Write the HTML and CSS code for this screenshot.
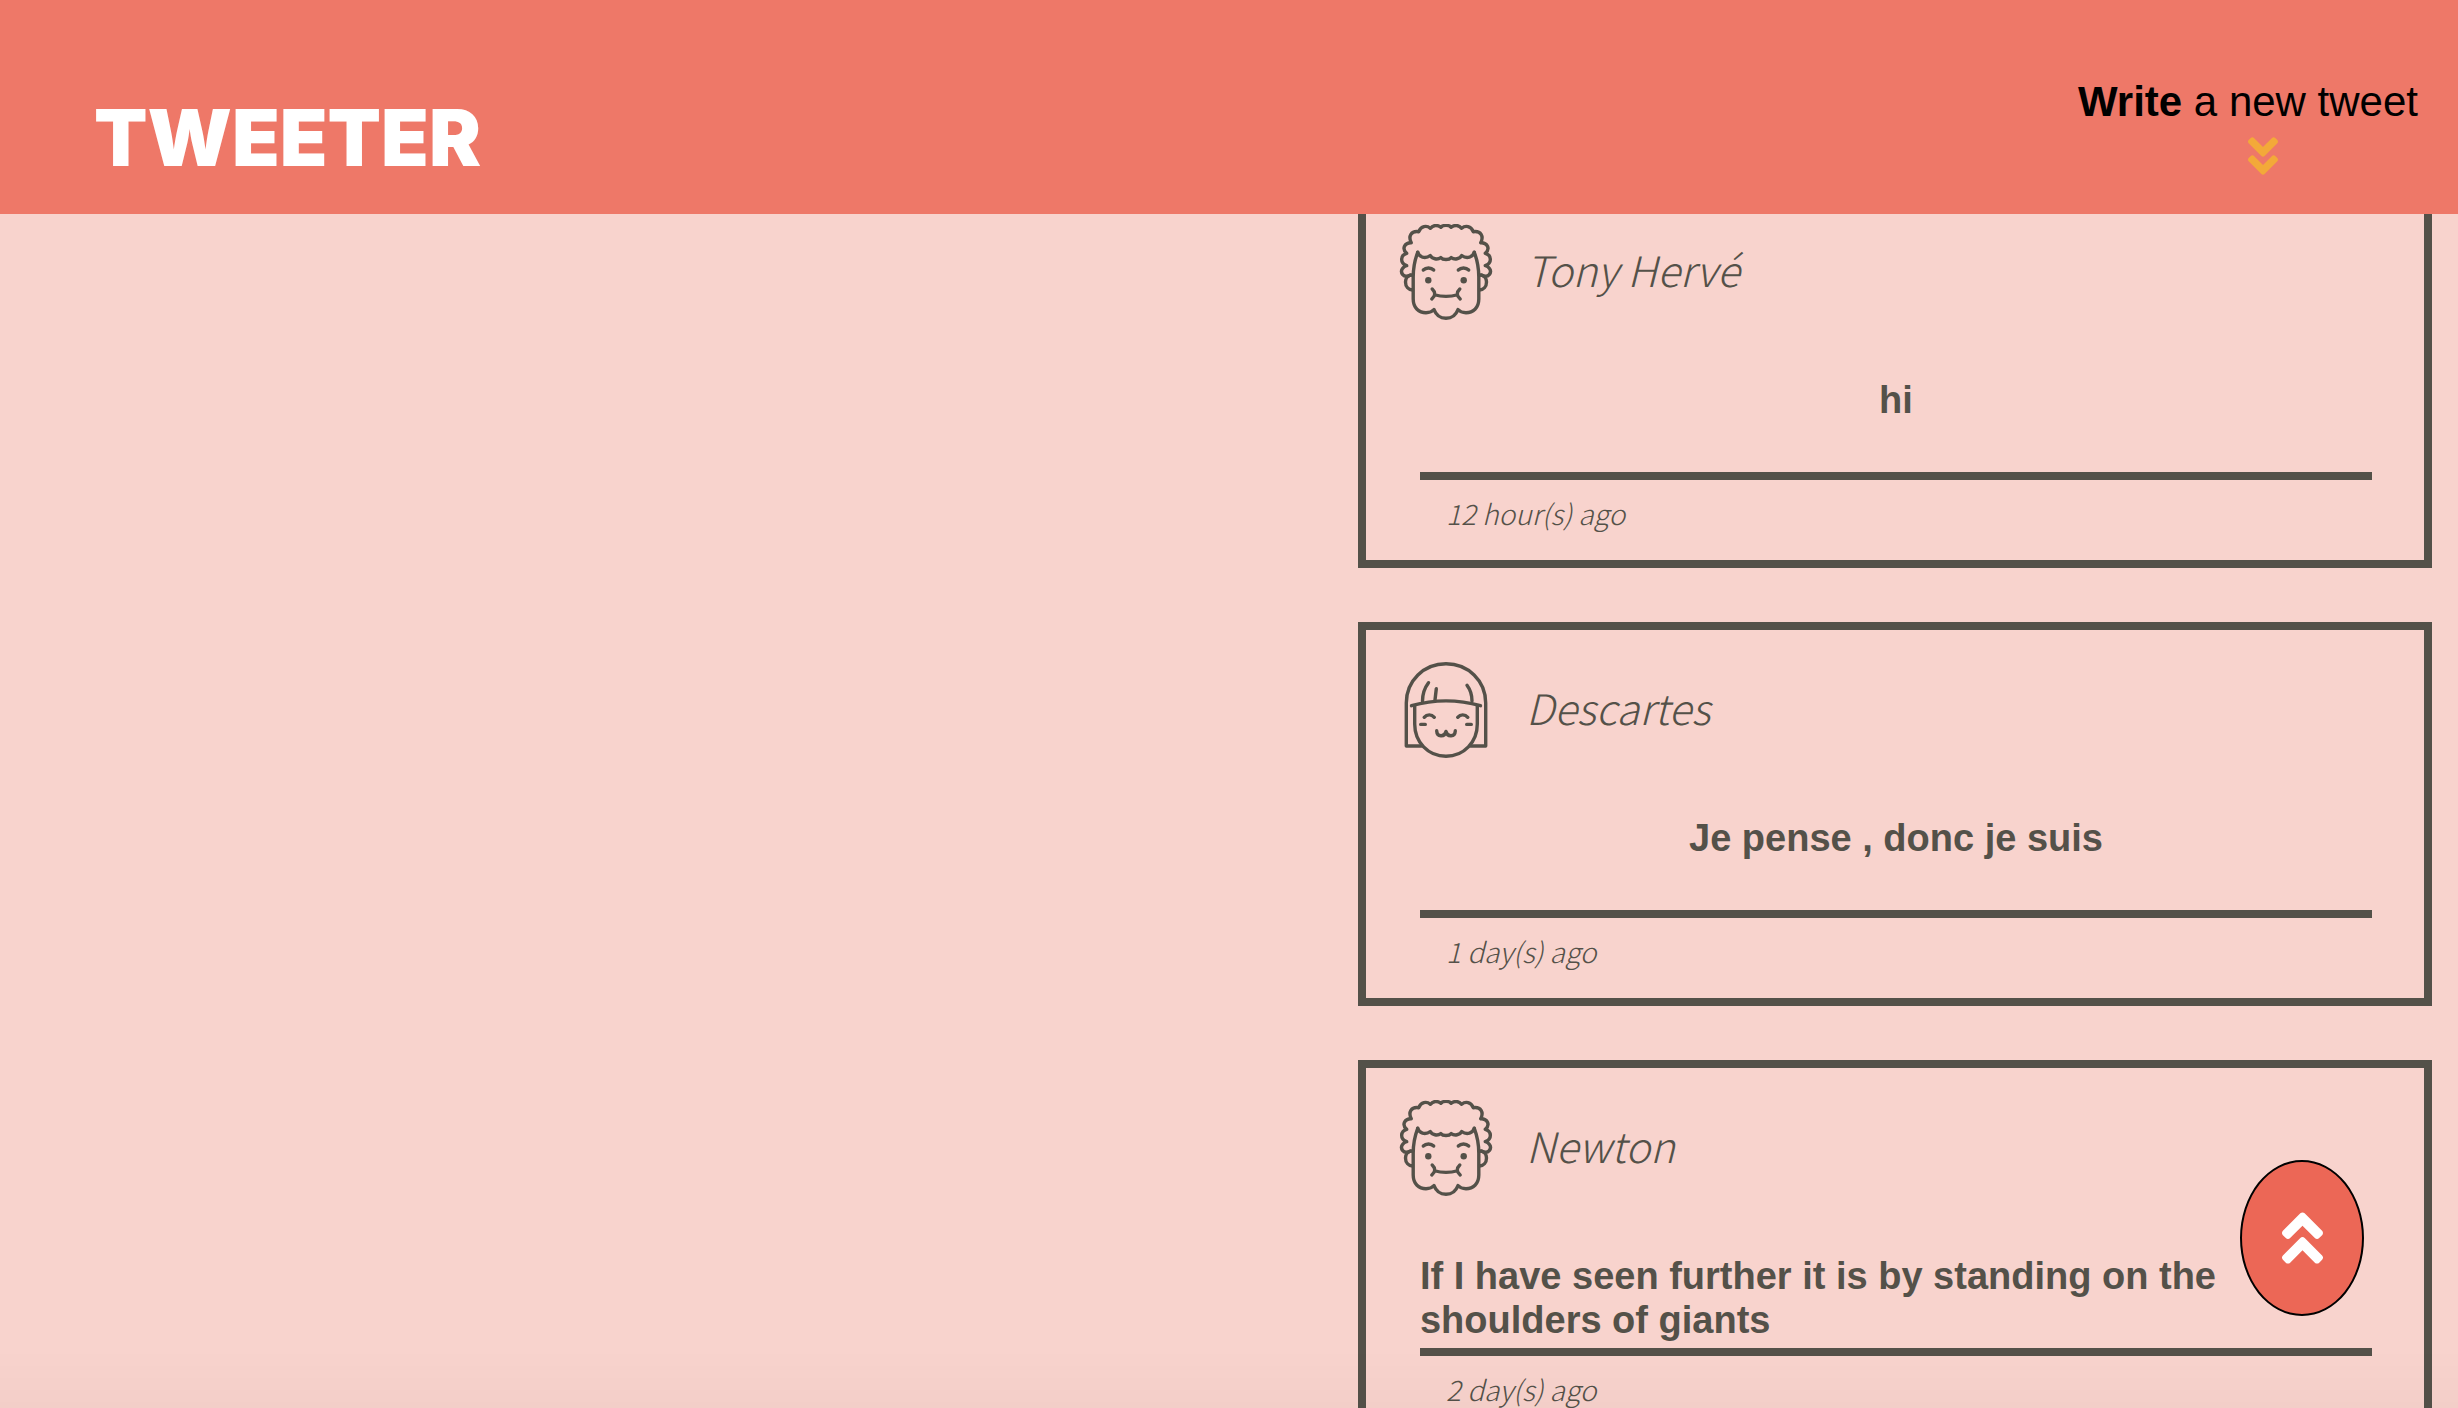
FILE: index.html
```html
<!DOCTYPE html>
<html lang="en">
<head>
<meta charset="utf-8">
<title>Tweeter</title>
<link rel="stylesheet" href="styles.css">
</head>
<body>
<svg class="sprite" aria-hidden="true">
  <symbol id="avatar-curly" viewBox="0 0 96 96" stroke-width="3.4">
    <path d="M19.7 28.3C17.2 35 15.2 45 15.2 53V75C15.2 84 21 88.7 28 88.7C31.5 88.7 34.3 87.5 36 85.5C38 91 42 94.3 48 94.3C54 94.3 58 91 60 85.5C61.7 87.5 64.5 88.7 68 88.7C75 88.7 80.8 84 80.8 75V53C80.8 45 78.8 35 76.3 28.3"/>
    <path d="M19.7 28.3C21 33 27 35.5 32.3 31.5C34 35 39.5 36 42.8 33.6C45 36.2 51 36.2 53.2 33.6C56.5 36 62 35 63.7 31.5C69 35.5 75 33 76.3 28.3"/>
    <path d="M12.5 51C5 55 2 48 4.5 44.5C5.5 43 7 42 8.7 41.7C1.5 39 2.5 31 8.7 29.3C3.5 25 6.5 18.5 13.3 18.7C10 12.5 13 6.5 20.8 7.7C23 2 28.5 1 32.3 4.3C35 1 39.5 0.5 42.8 3.3C45 0.7 51 0.7 53.2 3.3C56.5 0.5 61 1 63.7 4.3C67.5 1 73 2 75.2 7.7C83 6.5 86 12.5 82.7 18.7C89.5 18.5 92.5 25 87.3 29.3C93.5 31 94.5 39 87.3 41.7C89 42 90.5 43 91.5 44.5C94 48 91 55 83.5 51"/>
    <path d="M14.5 51C9.5 51 7.5 55 7.5 58C7.5 62.5 10.5 65.8 14.5 66M81.5 51C86.5 51 88.5 55 88.5 58C88.5 62.5 85.5 65.8 81.5 66"/>
    <path d="M25.3 46C28 43.3 33 43.3 35.7 46M60.3 46C63 43.3 68 43.3 70.7 46"/>
    <path d="M34.2 65Q39.5 70 33.8 75M61.8 65Q56.5 70 62.2 75M37.5 71C43 72.8 53 72.8 58.5 71"/>
    <circle class="dot" cx="30.3" cy="56.2" r="3.2"/><circle class="dot" cx="65.7" cy="56.2" r="3.2"/>
  </symbol>
  <symbol id="avatar-bob" viewBox="0 0 96 96" stroke-width="3.4">
    <path d="M23.5 84H8.3V41C8.3 18.5 26 1.7 48 1.7S87.7 18.5 87.7 41V84H72.5"/>
    <path d="M13.5 43.7Q48 34 82.5 43.7"/>
    <path d="M16.7 44V62C16.7 80 30 94.3 48 94.3S79.3 80 79.3 62V44"/>
    <path d="M30.5 20.7C26.5 26 24.5 32 24.5 39M38.3 26.7L37 38M69 23.3C72.5 28 74 33 74 39"/>
    <path d="M26.2 55.3C29 52 33.5 52 36.3 55.3M59.7 55.3C62.5 52 67 52 69.8 55.3"/>
    <path d="M22.7 62.4H27.3M68.7 62.4H73.3"/>
    <path d="M38.7 68.8C39 75 46.5 75.5 48 69.5C49.5 75.5 57 75 57.3 68.8"/>
  </symbol>
</svg>

<header class="topbar">
  <h1 class="logo">TWEETER</h1>
  <a class="compose" href="#new-tweet">
    <span><strong>Write</strong> a new tweet</span>
    <svg class="compose-icon" viewBox="0 0 320 512" aria-hidden="true"><path d="M143 256.3L7 120.3c-9.4-9.4-9.4-24.6 0-33.9l22.6-22.6c9.4-9.4 24.6-9.4 33.9 0l96.4 96.4 96.4-96.4c9.4-9.4 24.6-9.4 33.9 0L313 86.3c9.4 9.4 9.4 24.6 0 33.9l-136 136c-9.4 9.5-24.6 9.5-34 .1zm34 192l136-136c9.4-9.4 9.4-24.6 0-33.9l-22.6-22.6c-9.4-9.4-24.6-9.4-33.9 0L160 352.1l-96.4-96.4c-9.4-9.4-24.6-9.4-33.9 0L7 278.3c-9.4 9.4-9.4 24.6 0 33.9l136 136c9.4 9.5 24.6 9.5 34 .1z"/></svg>
  </a>
</header>

<main class="page">
  <section class="feed" aria-label="Tweets">
    <article class="tweet">
      <header class="tweet-head">
        <svg class="avatar" aria-hidden="true"><use href="#avatar-curly"/></svg>
        <h2 class="name">Tony Hervé</h2>
      </header>
      <div class="tweet-body"><p class="tweet-text">hi</p></div>
      <footer class="tweet-foot">12 hour(s) ago</footer>
    </article>
    <article class="tweet">
      <header class="tweet-head">
        <svg class="avatar" aria-hidden="true"><use href="#avatar-bob"/></svg>
        <h2 class="name">Descartes</h2>
      </header>
      <div class="tweet-body"><p class="tweet-text">Je pense , donc je suis</p></div>
      <footer class="tweet-foot">1 day(s) ago</footer>
    </article>
    <article class="tweet">
      <header class="tweet-head">
        <svg class="avatar" aria-hidden="true"><use href="#avatar-curly"/></svg>
        <h2 class="name">Newton</h2>
      </header>
      <div class="tweet-body"><p class="tweet-text">If I have seen further it is by standing on the shoulders of giants</p></div>
      <footer class="tweet-foot">2 day(s) ago</footer>
    </article>
  </section>
</main>

<button class="to-top" type="button" aria-label="Back to top">
  <svg class="to-top-icon" viewBox="0 0 320 512" aria-hidden="true"><path d="M177 255.7l136 136c9.4 9.4 9.4 24.6 0 33.9l-22.6 22.6c-9.4 9.4-24.6 9.4-33.9 0L160 351.9l-96.4 96.4c-9.4 9.4-24.6 9.4-33.9 0L7 425.7c-9.4-9.4-9.4-24.6 0-33.9l136-136c9.4-9.5 24.6-9.5 34-.1zm-34-192L7 199.7c-9.4 9.4-9.4 24.6 0 33.9l22.6 22.6c9.4 9.4 24.6 9.4 33.9 0l96.4-96.4 96.4 96.4c9.4 9.4 24.6 9.4 33.9 0l22.6-22.6c9.4-9.4 9.4-24.6 0-33.9l-136-136c-9.2-9.4-24.4-9.4-33.8 0z"/></svg>
</button>
</body>
</html>
```
FILE: styles.css
```css
:root {
  --ink: #545149;
  --blush: #f8d3cd;
  --coral: #ee7868;
}

* {
  box-sizing: border-box;
}

body {
  margin: 0;
  height: 100vh;
  overflow: hidden;
  background: var(--blush);
  color: var(--ink);
  font-family: "Liberation Sans", Arial, sans-serif;
}

/* Soft shade along the bottom edge of the window */
body::after {
  content: "";
  position: fixed;
  inset: auto 0 0;
  height: 60px;
  background: linear-gradient(rgba(0, 0, 0, 0), rgba(0, 0, 0, 0.02));
  pointer-events: none;
}

.sprite {
  display: none;
}

/* Top bar */
.topbar {
  position: fixed;
  inset: 0 0 auto;
  z-index: 1;
  display: flex;
  justify-content: space-between;
  padding: 78px 40px 30px 94px;
  height: 214px;
  background: var(--coral);
}

.logo {
  margin: 0;
  padding-top: 20px;
  color: #fff;
  font: 900 78px/80px Inter, sans-serif;
}

.compose {
  display: flex;
  flex-direction: column;
  align-items: center;
  color: #000;
  font-size: 42px;
  line-height: 48px;
  text-decoration: none;
}

.compose-icon {
  width: 30px;
  height: 48px;
  margin: 6px 0 0 30px;
  fill: #f3a939;
}

/* Feed */
.page {
  display: grid;
  grid-template-columns: 110fr 87fr;
  padding: 184px 26px 0 0;
}

.feed {
  grid-column: 2;
  display: grid;
  gap: 54px;
}

.tweet {
  border: 8px solid var(--ink);
}

.tweet-head {
  display: flex;
  align-items: center;
  gap: 32px;
  padding: 32px 32px 0;
}

.avatar {
  width: 96px;
  height: 96px;
  fill: none;
  stroke: var(--ink);
  stroke-linecap: round;
  stroke-linejoin: round;
}

.dot {
  fill: var(--ink);
  stroke: none;
}

.name,
.tweet-foot {
  font-family: "Noto Sans CJK SC", sans-serif;
  font-style: italic;
  font-weight: 300;
}

.name {
  margin: 0;
  padding-bottom: 6px;
  font-size: 42px;
  line-height: 64px;
}

.tweet-body {
  min-height: 102px;
  margin: 58px 52px 0 54px;
  border-bottom: 8px solid var(--ink);
}

.tweet-text {
  width: fit-content;
  margin: 0 auto;
  font-size: 38px;
  font-weight: 700;
  line-height: 44px;
}

.tweet-foot {
  padding: 13px 32px 27px 80px;
  font-size: 28px;
  line-height: 40px;
}

/* Back to top */
.to-top {
  position: fixed;
  right: 94px;
  bottom: 92px;
  display: grid;
  place-items: center;
  width: 124px;
  height: 156px;
  padding: 0;
  border: 2px solid #000;
  border-radius: 50%;
  background: #ec6756;
}

.to-top-icon {
  width: 41px;
  height: 66px;
  fill: #fff;
}
```
